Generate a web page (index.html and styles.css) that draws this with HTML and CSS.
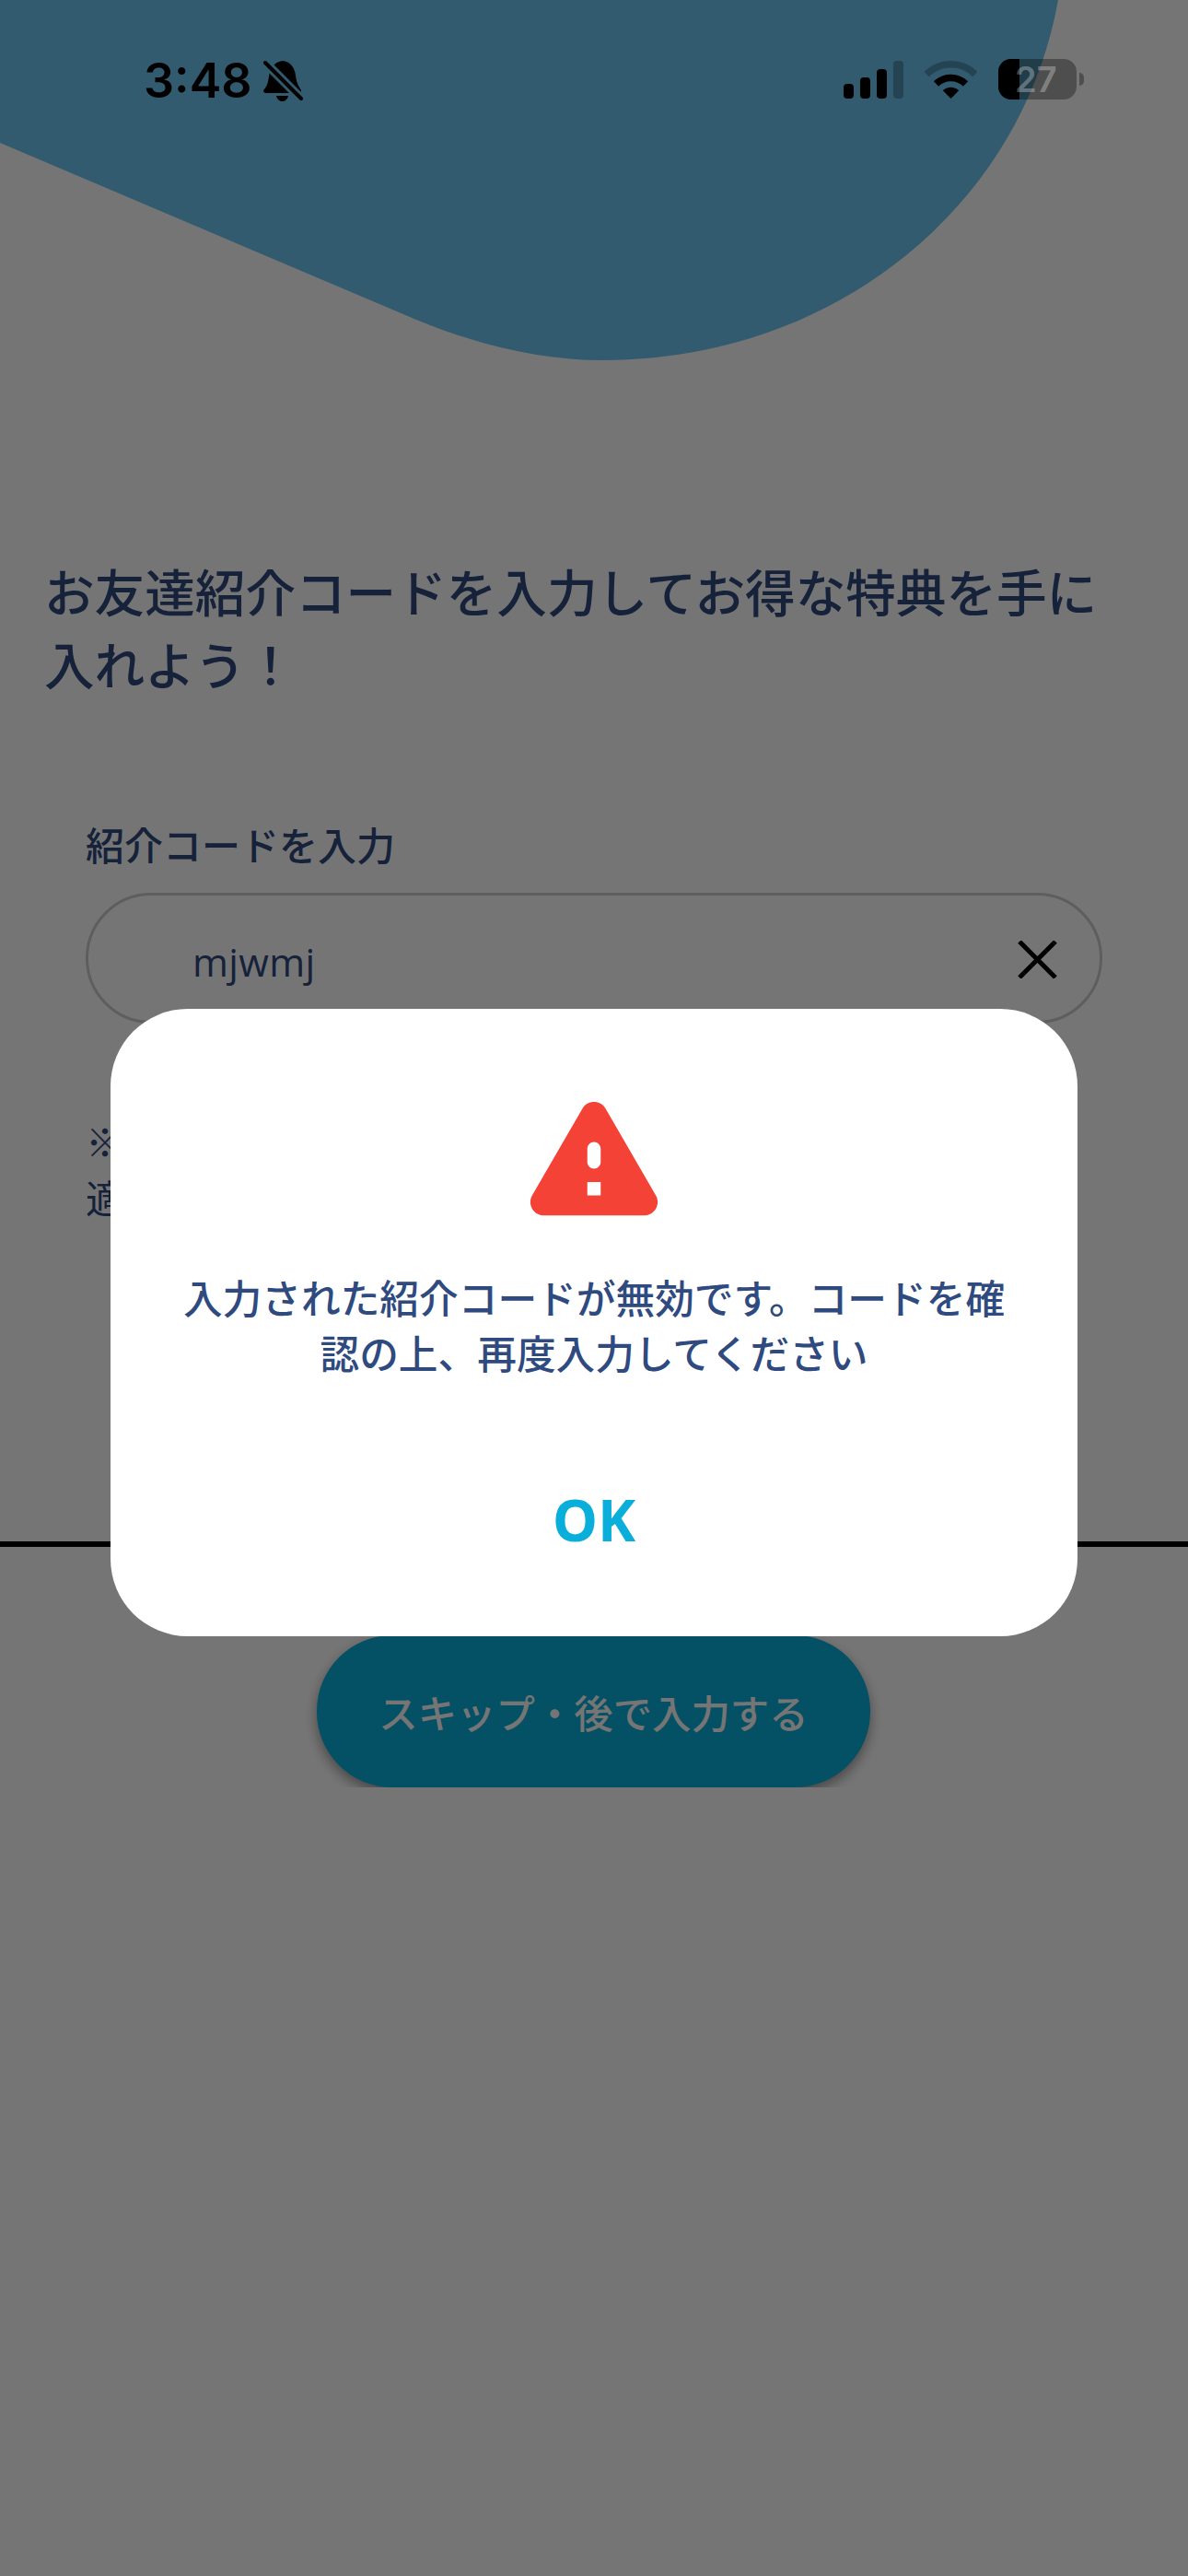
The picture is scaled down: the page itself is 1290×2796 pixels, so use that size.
FILE: index.html
```html
<!DOCTYPE html>
<html lang="ja">
<head>
<meta charset="utf-8">
<title>紹介コード</title>
<link rel="stylesheet" href="styles.css">
</head>
<body>
<div class="screen">
  <svg class="blob" viewBox="0 0 1290 391" aria-hidden="true"><path d="M0 0H1149C1110 220 910 391 654 391C590 391 520 375 452 347L0 155Z"/></svg>
  <main class="content">
    <h1 class="title">お友達紹介コードを入力してお得な特典を手に入れよう！</h1>
    <section class="form">
      <label class="label">紹介コードを入力</label>
      <div class="field">
        <span class="field-value">mjwmj</span>
        <svg class="clear" viewBox="0 0 43 41" aria-hidden="true"><path d="M2 1L41 40M41 1L2 40"/></svg>
      </div>
      <p class="note">※<br>適</p>
    </section>
  </main>
  <div class="divider"></div>
  <div class="skip-clip"><button class="skip">スキップ・後で入力する</button></div>

  <div class="scrim">
    <div class="dialog">
      <svg class="warn" viewBox="0 0 24 24" aria-hidden="true"><path d="M4.47 21h15.06c1.54 0 2.5-1.67 1.73-3L13.73 4.99c-.77-1.33-2.69-1.33-3.46 0L2.74 18c-.77 1.33.19 3 1.73 3zM12 14c-.55 0-1-.45-1-1v-2c0-.55.45-1 1-1s1 .45 1 1v2c0 .55-.45 1-1 1zm1 4h-2v-2h2v2z"/></svg>
      <p class="message">入力された紹介コードが無効です。コードを確認の上、再度入力してください</p>
      <button class="ok">OK</button>
    </div>
  </div>

  <header class="status">
    <div class="status-left">
      <span class="time">3:48</span>
      <svg class="bell" viewBox="0 0 43 46" aria-hidden="true">
        <mask id="bell-cut"><rect width="43" height="46" fill="#fff"/><path d="M2 3L41 42" stroke="#000" stroke-width="10"/></mask>
        <g mask="url(#bell-cut)"><path d="M21 1C30 2 34 9 35 17C36 25 38 28 41 33Q41 36 38 36H3Q0 36 0 33C3 30 5 26 6 18C7 9 12 2 21 1Z"/><path d="M14 39H27C26 43 23 45 20.5 45C18 45 15 43 14 39Z"/></g>
        <path d="M2 3L41 42" stroke="#000" stroke-width="4" stroke-linecap="round"/>
      </svg>
    </div>
    <div class="status-right">
      <div class="signal"><i class="b1"></i><i class="b2"></i><i class="b3"></i><i class="b4"></i></div>
      <svg class="wifi" viewBox="0 0 57 41" aria-hidden="true">
        <path class="arc-dim" d="M2.16 14.66A37.25 37.25 0 0 1 54.84 14.66"/>
        <path class="arc" d="M12.5 25A22.65 22.65 0 0 1 44.5 25"/>
        <path d="M28.5 41L19.8 32.3A12.3 12.3 0 0 1 37.2 32.3Z"/>
      </svg>
      <div class="battery"><div class="battery-fill"></div><span class="battery-text">27</span></div>
      <div class="battery-nub"></div>
    </div>
  </header>
</div>
</body>
</html>
```
FILE: styles.css
```css
* { box-sizing: border-box; }
html, body { margin: 0; padding: 0; }
body { background: #fff; font-family: "Noto Sans CJK JP", "Noto Sans", sans-serif; }
.screen { position: relative; width: 1290px; height: 2796px; overflow: hidden; background: #fff; }

.blob { display: block; width: 1290px; height: 391px; }
.blob path { fill: #6dc6f1; }

.content { padding: 210px 48px 0; }
.title { margin: 0; width: 1150px; font-size: 54.6px; line-height: 79px; font-weight: 500; color: #31497f; }

.form { margin: 127px 45px 0; }
.label { display: block; font-size: 42px; line-height: 60px; font-weight: 500; color: #31497f; }
.field { display: flex; align-items: center; justify-content: space-between; height: 142px; margin-top: 23px; padding: 0 46px 0 113px; border: 3px solid #ccc; border-radius: 71px; }
.field-value { padding-top: 6px; font-family: "Open Sans", "Noto Sans", sans-serif; font-size: 42px; letter-spacing: .4px; color: #31497f; }
.clear { width: 43px; height: 41px; margin-top: 2px; }
.clear path { fill: none; stroke: #000; stroke-width: 5; }
.note { margin: 96px 0 0; font-size: 42px; line-height: 61px; color: #31497f; }

.divider { height: 6px; margin-top: 344px; background: #000; }
.skip-clip { display: flex; justify-content: center; height: 261px; padding-top: 96px; overflow: hidden; }
.skip { width: 601px; height: 165px; margin-left: -1px; padding: 0; border: 0; border-radius: 82px; background: #09aed9; box-shadow: 0 6px 14px rgba(0, 0, 0, .4); font: 500 42.4px "Noto Sans CJK JP", sans-serif; color: #fff; }

.scrim { position: absolute; inset: 0; display: flex; justify-content: center; align-items: flex-start; padding-top: 1095px; background: rgba(0, 0, 0, .54); }
.dialog { display: flex; flex-direction: column; align-items: center; width: 1050px; height: 681px; padding-top: 72px; border-radius: 84px; background: #fff; }
.warn { display: block; width: 174px; height: 174px; }
.warn path { fill: #f44336; }
.message { width: 900px; margin: 36px 0 0; font-size: 42.7px; line-height: 60px; font-weight: 500; text-align: center; color: #2f4a7f; }
.ok { margin-top: 108px; padding: 0; border: 0; background: none; font: 700 62px/88px "Noto Sans", sans-serif; color: #09aedb; }

.status { position: absolute; top: 0; left: 0; right: 0; display: flex; justify-content: space-between; height: 120px; padding: 64px 113px 0 156px; }
.status-left { display: flex; align-items: flex-start; }
.time { margin-top: -4px; font: 600 52px/56px Inter, sans-serif; color: #000; }
.bell { display: block; width: 43px; height: 46px; margin: 1px 0 0 12px; }
.status-right { display: flex; align-items: flex-start; }
.signal { display: flex; align-items: flex-end; gap: 7px; height: 41px; margin-top: 2px; }
.signal i { display: block; width: 11px; border-radius: 4px; background: #000; }
.b1 { height: 16px; }
.b2 { height: 23px; }
.b3 { height: 32px; }
.b4 { height: 41px; opacity: .25; }
.wifi { display: block; width: 57px; height: 41px; margin: 2px 0 0 23px; }
.wifi path { fill: #000; }
.wifi .arc, .wifi .arc-dim { fill: none; stroke: #000; stroke-width: 7.5; }
.wifi .arc-dim { opacity: .25; }
.battery { position: relative; width: 85px; height: 44px; margin-left: 23px; border-radius: 14px; overflow: hidden; background: rgba(0, 0, 0, .33); }
.battery-fill { width: 23px; height: 44px; background: #000; }
.battery-text { position: absolute; top: 0; left: 18px; font: 600 38px/44px Inter, sans-serif; color: rgba(255, 255, 255, .3); }
.battery-nub { width: 5px; height: 14px; margin: 15px 0 0 3px; border-radius: 0 5px 5px 0; background: rgba(0, 0, 0, .33); }
```
